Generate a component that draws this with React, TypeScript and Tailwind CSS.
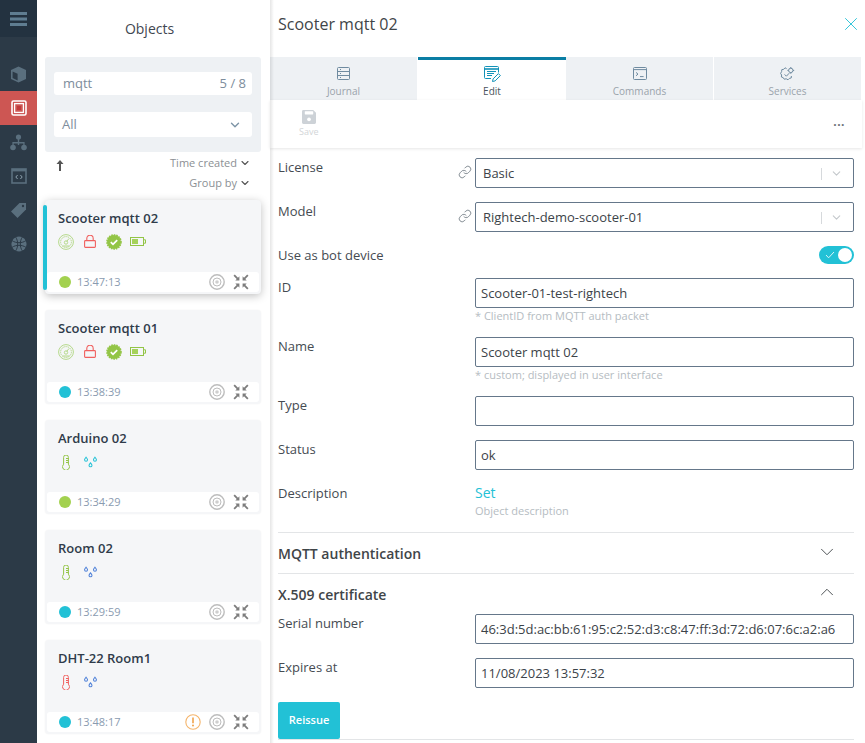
import React from "react";
import { ChevronDown, ChevronUp, X, Link } from "lucide-react";

const MenuIcon = () => (
  <svg width="18" height="14" viewBox="0 0 18 14" fill="#5f7d91">
    <rect x="0" y="0" width="17" height="3" />
    <rect x="0" y="5.5" width="17" height="3" />
    <rect x="0" y="11" width="17" height="3" />
  </svg>
);

const CubeIcon = () => (
  <svg width="17" height="17" viewBox="0 0 17 17">
    <path d="M8.5 0.5l7.5 3.5v9l-7.5 3.5L1 13V4z" fill="#5a6f7e" />
    <path d="M2.6 5.4l5 2.4v6.6l-5-2.4z" fill="#2c3a47" />
  </svg>
);

const TargetSquareIcon = () => (
  <svg width="16" height="16" viewBox="0 0 16 16">
    <rect x="1" y="1" width="14" height="14" rx="1.5" fill="none" stroke="#fff" strokeWidth="1.6" />
    <rect x="3.6" y="3.6" width="8.8" height="8.8" fill="none" stroke="#fff" strokeWidth="1.3" />
    <rect x="6" y="6" width="4" height="4" fill="#c03a3a" />
  </svg>
);

const TreeIcon = () => (
  <svg width="17" height="17" viewBox="0 0 17 17" fill="#5a6f7e">
    <circle cx="8.5" cy="3" r="2.6" />
    <circle cx="3" cy="13.5" r="2.8" />
    <circle cx="14" cy="13.5" r="2.8" />
    <path d="M7.8 5h1.4v3h5.4v3h-1.3V9.4H9.2V11H7.8V9.4H3.7V11H2.4V8h5.4z" />
  </svg>
);

const CodeIcon = () => (
  <svg width="16" height="16" viewBox="0 0 16 16" fill="none">
    <rect x="1" y="1" width="14" height="14" stroke="#5a6f7e" strokeWidth="1.6" />
    <rect x="1" y="1" width="14" height="2.4" fill="#5a6f7e" />
    <path d="M6.6 7L4.8 9l1.8 2M9.4 7l1.8 2-1.8 2" stroke="#8fa3b0" strokeWidth="1" />
  </svg>
);

const TagIcon = () => (
  <svg width="17" height="17" viewBox="0 0 17 17">
    <path d="M9.5 1H16v6.5L7.5 16 1 9.5z" fill="#5a6f7e" />
    <circle cx="13" cy="4" r="1.2" fill="#2c3a47" />
  </svg>
);

const GlobeIcon = () => (
  <svg width="16" height="16" viewBox="0 0 16 16">
    <circle cx="8" cy="8" r="7.6" fill="#5a6f7e" />
    <path d="M1 4.6C5 7.4 11 7.4 15 4.6M1 11.4C5 8.6 11 8.6 15 11.4M4.6 1C7.4 5 7.4 11 4.6 15M11.4 1C8.6 5 8.6 11 11.4 15" stroke="#2c3a47" strokeWidth="1" fill="none" />
  </svg>
);

const GaugeIcon = () => (
  <svg width="16" height="16" viewBox="0 0 16 16" fill="none" stroke="#b5d98a" strokeWidth="1">
    <circle cx="8" cy="8" r="7.4" />
    <circle cx="8" cy="8" r="5.4" strokeDasharray="1.5 0.7" />
    <circle cx="8" cy="8.5" r="1.7" />
    <path d="M8.6 7.5l2.4-3M4.6 12h6.8" />
  </svg>
);

const LockIcon = () => (
  <svg width="12" height="13" viewBox="0 0 12 13" fill="none" stroke="#f0605f" strokeWidth="1.1">
    <rect x="0.6" y="5.6" width="10.8" height="6.8" rx="0.8" />
    <path d="M2.8 5.6V3.4a3.2 3.2 0 0 1 6.4 0v2.2" />
  </svg>
);

const BadgeIcon = () => (
  <svg width="16" height="16" viewBox="0 0 16 16">
    <circle cx="8" cy="8" r="7" fill="#93c546" stroke="#93c546" strokeWidth="1.6" strokeDasharray="1.6 0.9" />
    <path d="M4.8 8.2l2.2 2.1 4.2-4.2" fill="none" stroke="#fff" strokeWidth="1.8" />
  </svg>
);

const BatteryIcon = () => (
  <svg width="16" height="9" viewBox="0 0 16 9" fill="none">
    <rect x="0.5" y="0.5" width="13" height="8" stroke="#93c546" strokeWidth="1" />
    <rect x="2" y="2" width="6" height="5" fill="#a5d25a" />
    <path d="M14 2.8h1.5v3.4H14" stroke="#93c546" strokeWidth="1" />
  </svg>
);

const ThermoIcon = ({ color }: { color: string }) => (
  <svg width="8" height="15" viewBox="0 0 8 15" fill="none" stroke={color} strokeWidth="1">
    <path d="M1.6 2.4a2.4 2.4 0 0 1 4.8 0v6.8a3.5 3.5 0 1 1-4.8 0z" />
    <path d="M4 3.5h2.4M4 5.5h2.4M4 7.5h2.4" />
  </svg>
);

const DropsIcon = ({ color }: { color: string }) => (
  <svg width="13" height="13" viewBox="0 0 14 13" fill="none" stroke={color} strokeWidth="1.1">
    <path d="M2.2 0.8c1 1.3 1.6 2 1.6 2.8a1.6 1.6 0 0 1-3.2 0c0-.8.6-1.5 1.6-2.8z" />
    <path d="M11.8 0.8c1 1.3 1.6 2 1.6 2.8a1.6 1.6 0 0 1-3.2 0c0-.8.6-1.5 1.6-2.8z" />
    <path d="M7 6.8c1 1.3 1.6 2 1.6 2.8a1.6 1.6 0 0 1-3.2 0c0-.8.6-1.5 1.6-2.8z" />
  </svg>
);

const TargetIcon = () => (
  <svg width="16" height="16" viewBox="0 0 16 16" fill="none" stroke="#bdbdbd">
    <circle cx="8" cy="8" r="7.2" strokeWidth="1.4" />
    <circle cx="8" cy="8" r="4" strokeWidth="1" />
    <circle cx="8" cy="8" r="1.8" fill="#cfcfcf" strokeWidth="0" />
  </svg>
);

const CompressIcon = () => (
  <svg width="16" height="16" viewBox="0 0 16 16" fill="#7d7d7d">
    <path d="M0.5 1.8L1.8 0.5 5 3.7 6.4 2.3V6.4H2.3L3.7 5z" />
    <path d="M15.5 1.8L14.2 0.5 11 3.7 9.6 2.3V6.4h4.1L12.3 5z" />
    <path d="M0.5 14.2l1.3 1.3L5 12.3l1.4 1.4V9.6H2.3L3.7 11z" />
    <path d="M15.5 14.2l-1.3 1.3-3.2-3.2-1.4 1.4V9.6h4.1L12.3 11z" />
  </svg>
);

const WarnIcon = () => (
  <svg width="16" height="16" viewBox="0 0 16 16" fill="none">
    <circle cx="8" cy="8" r="7.2" stroke="#f5b56c" strokeWidth="1.1" />
    <path d="M8 3.6v5.6" stroke="#f0a24a" strokeWidth="1.6" />
    <circle cx="8" cy="11.6" r="1" fill="#f0a24a" />
  </svg>
);

const JournalIcon = () => (
  <svg width="13" height="13" viewBox="0 0 13 13" fill="none" stroke="#6f8ba0" strokeWidth="1">
    <rect x="0.5" y="0.5" width="12" height="12" rx="1" />
    <path d="M0.5 4.5h12M0.5 8.5h12M3 2.5h1M3 6.5h1M3 10.5h1" />
  </svg>
);

const EditIcon = () => (
  <svg width="17" height="16" viewBox="0 0 17 16" fill="none" stroke="#1392b8" strokeWidth="1">
    <path d="M7 12.5H1.5a1 1 0 0 1-1-1v-10a1 1 0 0 1 1-1h12a1 1 0 0 1 1 1v5" />
    <path d="M0.5 3h14" strokeWidth="1.6" />
    <path d="M3 5.5h9M3 7.5h7M3 9.5h5" strokeWidth="1.2" />
    <path d="M8.5 15.5l.6-2.6 5.3-5.3 2 2-5.3 5.3z" />
  </svg>
);

const TerminalIcon = () => (
  <svg width="14" height="13" viewBox="0 0 14 13" fill="none" stroke="#6f8ba0" strokeWidth="1">
    <rect x="0.5" y="0.5" width="13" height="12" rx="1" />
    <path d="M0.5 2.6h13M3 5.4l2 1.7L3 8.8M7 9.6h3.6" />
  </svg>
);

const ServicesIcon = () => (
  <svg width="15" height="16" viewBox="0 0 15 16" fill="none" stroke="#6f8ba0" strokeWidth="1">
    <path d="M6.6 2.6L5 1.8 3.6 3.4 1.8 3.6l-.2 2L.6 7.4l1 1.6-.2 2 1.8.6 1 1.6 2-.4 1.8 1 1.4-1.4 1.8-.4.2-2" />
    <path d="M4.6 8.4l1.8 1.8 2.8-3" />
    <circle cx="10.8" cy="4.4" r="2.2" />
    <path d="M10.8 1v1.2M10.8 6.6v1.2M14.2 4.4H13M8.6 4.4H7.4" />
  </svg>
);

const SaveIcon = () => (
  <svg width="14" height="14" viewBox="0 0 15 15">
    <path d="M1.5 0H12l3 3v10.5a1.5 1.5 0 0 1-1.5 1.5h-12A1.5 1.5 0 0 1 0 13.5v-12A1.5 1.5 0 0 1 1.5 0z" fill="#cdd2d7" />
    <rect x="3" y="1.4" width="9" height="3.4" rx="0.5" fill="#fff" />
    <circle cx="7.5" cy="10" r="2" fill="#fff" />
  </svg>
);

const SortArrow = () => (
  <svg width="8" height="11" viewBox="0 0 8 11" fill="#555">
    <path d="M4 0L7.5 4H5v7H3V4H.5z" />
  </svg>
);

const Toggle = () => (
  <div className="w-[35px] h-[18px] rounded-full bg-[#22c1d6] relative flex items-center pl-[6px]">
    <svg width="10" height="8" viewBox="0 0 10 8" fill="none" stroke="#d8f5f9" strokeWidth="1">
      <path d="M1 4l2.6 2.8L9 1" />
    </svg>
    <span className="absolute right-[2px] top-[2px] w-[14px] h-[14px] rounded-full bg-white" />
  </div>
);

const sideItems = [
  { icon: <CubeIcon /> },
  { icon: <TargetSquareIcon />, active: true },
  { icon: <TreeIcon /> },
  { icon: <CodeIcon /> },
  { icon: <TagIcon /> },
  { icon: <GlobeIcon /> },
];

const objects = [
  { name: "Scooter mqtt 02", time: "13:47:13", dot: "bg-[#a3d14f]", selected: true, kind: "scooter" },
  { name: "Scooter mqtt 01", time: "13:38:39", dot: "bg-[#22c1d6]", kind: "scooter" },
  { name: "Arduino 02", time: "13:34:29", dot: "bg-[#a3d14f]", kind: "sensor", thermo: "#93c546", drops: "#22c1d6" },
  { name: "Room 02", time: "13:29:59", dot: "bg-[#22c1d6]", kind: "sensor", thermo: "#93c546", drops: "#4c7fd8" },
  { name: "DHT-22 Room1", time: "13:48:17", dot: "bg-[#22c1d6]", kind: "sensor", thermo: "#f0605f", drops: "#4c7fd8", warn: true },
];

const ObjectCard = ({ item }: { item: (typeof objects)[number] }) => (
  <div
    className={
      "relative h-[94px] shrink-0 rounded-[4px] bg-[#f5f6f8] flex flex-col " +
      (item.selected ? "shadow-[0_2px_8px_rgba(0,0,0,0.25)]" : "shadow-[0_0_2px_rgba(0,0,0,0.05)]")
    }
  >
    {item.selected && <span className="absolute left-[-2px] top-[5px] bottom-[4px] w-[4px] rounded-[2px] bg-[#22c1d6]" />}
    <div className="pl-[13px] pt-[9px] text-[13px] leading-[18px] font-semibold text-[#2f3b4a]">{item.name}</div>
    <div className="pl-[13px] mt-[6px] flex items-center h-[17px]">
      {item.kind === "scooter" ? (
        <div className="flex items-center">
          <GaugeIcon />
          <span className="ml-[10px]"><LockIcon /></span>
          <span className="ml-[10px]"><BadgeIcon /></span>
          <span className="ml-[8px]"><BatteryIcon /></span>
        </div>
      ) : (
        <div className="flex items-center pl-[4px] pt-[1px]">
          <ThermoIcon color={item.thermo as string} />
          <span className="ml-[14px]"><DropsIcon color={item.drops as string} /></span>
        </div>
      )}
    </div>
    <div className="mt-auto mx-[2px] mb-[2px] h-[20px] rounded-[3px] bg-white flex items-center pl-[12px] pr-[10px]">
      <span className={"w-[12px] h-[12px] rounded-full " + item.dot} />
      <span className="ml-[6px] text-[11px] text-[#8a9bb0]">{item.time}</span>
      <div className="ml-auto flex items-center gap-[8px]">
        {item.warn && <WarnIcon />}
        <TargetIcon />
        <CompressIcon />
      </div>
    </div>
  </div>
);

const tabs = [
  { label: "Journal", icon: <JournalIcon /> },
  { label: "Edit", icon: <EditIcon />, active: true },
  { label: "Commands", icon: <TerminalIcon /> },
  { label: "Services", icon: <ServicesIcon /> },
];

const Row = ({ label, children }: { label: string; children: React.ReactNode }) => (
  <div className="flex">
    <div className="w-[197px] shrink-0 text-[13px] leading-[18px] text-[#454b52]">{label}</div>
    <div className="flex-1 min-w-0">{children}</div>
  </div>
);

const TextField = ({ value, hint }: { value: string; hint?: string }) => (
  <div>
    <input
      readOnly
      value={value}
      className="w-full h-[30px] rounded-[2px] border border-[#65778a] px-[5px] text-[13px] text-[#3c4349] outline-none bg-white"
    />
    {hint && <div className="text-[11px] leading-[15px] text-[#b5bcc2]">{hint}</div>}
  </div>
);

const SelectRow = ({ label, value }: { label: string; value: string }) => (
  <div className="flex">
    <div className="w-[180px] shrink-0 text-[13px] leading-[18px] text-[#454b52]">{label}</div>
    <div className="w-[17px] shrink-0 pt-[7px] text-[#6e7881]">
      <Link size={14} strokeWidth={1.4} />
    </div>
    <div className="flex-1 h-[30px] rounded-[2px] border border-[#65778a] flex items-center pl-[7px] pr-[10px] pt-[1px] text-[13px] text-[#3c4349]">
      <span>{value}</span>
      <span className="ml-auto w-px h-[12px] bg-[#d6d9dc]" />
      <ChevronDown size={13} className="ml-[8px] text-[#c4c8cc]" />
    </div>
  </div>
);

const App = () => {
  return (
    <div className="w-[865px] h-[743px] overflow-hidden flex bg-white font-['Open_Sans',sans-serif]">
      {/* Sidebar */}
      <div className="w-[37px] shrink-0 bg-[#2c3a47] flex flex-col">
        <div className="h-[37px] bg-[#233240] flex items-center justify-center"><MenuIcon /></div>
        <div className="mt-[20px] flex flex-col">
          {sideItems.map((s, i) => (
            <div key={i} className={"h-[34px] flex items-center justify-center " + (s.active ? "bg-[#cd5653]" : "")}>
              {s.icon}
            </div>
          ))}
        </div>
      </div>

      {/* Objects list */}
      <div className="w-[233px] shrink-0 pl-[8px] pr-[9px] flex flex-col">
        <div className="h-[57px] flex items-center justify-center pr-[7px] text-[14px] text-[#3f4750]">Objects</div>
        <div className="shrink-0 h-[95px] rounded-[3px] bg-[#eef1f4] px-[9px] pt-[15px] flex flex-col">
          <div className="h-[23px] rounded-[3px] bg-white flex items-center justify-between pl-[9px] pr-[6px] text-[13px] text-[#7d8d9c]">
            <span>mqtt</span>
            <span>5 / 8</span>
          </div>
          <div className="mt-[17px] h-[25px] rounded-[3px] bg-white flex items-center justify-between pl-[8px] pr-[10px] text-[13px] text-[#7d8d9c]">
            <span>All</span>
            <ChevronDown size={14} strokeWidth={2.4} className="text-[#7d94a6]" />
          </div>
        </div>
        <div className="h-[48px] shrink-0 flex justify-between pl-[11px] pr-[10px] pt-[1px]">
          <span className="pt-[7px]"><SortArrow /></span>
          <div className="flex flex-col items-end text-[11px] leading-[20px] text-[#8b8f94]">
            <span className="flex items-center gap-[2px]">Time created <ChevronDown size={12} strokeWidth={2.2} className="text-[#555]" /></span>
            <span className="flex items-center gap-[2px]">Group by <ChevronDown size={12} strokeWidth={2.2} className="text-[#555]" /></span>
          </div>
        </div>
        <div className="flex flex-col gap-[16px]">
          {objects.map((o) => (
            <ObjectCard key={o.name} item={o} />
          ))}
        </div>
      </div>

      {/* Details */}
      <div className="flex-1 min-w-0 mr-[3px] flex flex-col relative">
        <span className="absolute left-0 top-0 bottom-0 w-[4px] bg-gradient-to-r from-black/10 to-transparent z-10" />
        <div className="h-[57px] shrink-0 flex items-center justify-between pl-[8px] pb-[9px]">
          <span className="text-[16px] text-[#3f4548]">Scooter mqtt 02</span>
          <X size={22} strokeWidth={1} className="text-[#22c1d6]" />
        </div>
        <div className="grid grid-cols-4 h-[43px] shrink-0">
          {tabs.map((t) => (
            <div
              key={t.label}
              className={
                "flex flex-col items-center text-[10px] leading-[14px] " +
                (t.active
                  ? "bg-white border-t-[3px] border-[#0a7ea4] pt-[5px] text-[#4a545c]"
                  : "bg-[#eef1f4] mr-px pt-[8px] text-[#9aa3ab]")
              }
            >
              <div className="h-[17px] flex items-center">{t.icon}</div>
              <div className="mt-[2px]">{t.label}</div>
            </div>
          ))}
        </div>
        <div className="h-[48px] shrink-0 flex items-start justify-between pl-[29px] pr-[17px] pt-[10px] shadow-[0_1px_3px_rgba(0,0,0,0.1)]">
          <div className="flex flex-col items-center">
            <SaveIcon />
            <span className="mt-[2px] text-[9px] leading-[12px] text-[#d2d5d8]">Save</span>
          </div>
          <span className="mt-[6px] text-[12px] leading-[12px] font-bold text-[#6b7178] tracking-[0.5px]">...</span>
        </div>

        <div className="px-[8px] pt-[10px] flex flex-col">
          <div className="flex flex-col gap-[14px]">
            <SelectRow label="License" value="Basic" />
            <SelectRow label="Model" value="Rightech-demo-scooter-01" />
            <div className="flex justify-between items-center h-[18px]">
              <span className="pt-[1px] text-[13px] text-[#454b52]">Use as bot device</span>
              <Toggle />
            </div>
            <Row label="ID"><TextField value="Scooter-01-test-rightech" hint="* ClientID from MQTT auth packet" /></Row>
            <Row label="Name"><TextField value="Scooter mqtt 02" hint="* custom; displayed in user interface" /></Row>
            <Row label="Type"><TextField value="" /></Row>
            <Row label="Status"><TextField value="ok" /></Row>
            <Row label="Description">
              <div className="text-[14px] leading-[18px] text-[#22c1d6]">Set</div>
              <div className="text-[11px] leading-[15px] mt-[1px] text-[#b5bcc2]">Object description</div>
            </Row>
          </div>

          <div className="mt-[14px] border-t border-[#e3e5e7] h-[41px] pt-[1px] flex items-center justify-between pr-[16px]">
            <span className="text-[14px] font-semibold text-[#3f4548]">MQTT authentication</span>
            <ChevronDown size={22} strokeWidth={1} className="text-[#3f4548] mb-[3px]" />
          </div>
          <div className="border-t border-[#e3e5e7] h-[41px] pt-[1px] flex items-center justify-between pr-[16px]">
            <span className="text-[14px] font-semibold text-[#3f4548]">X.509 certificate</span>
            <ChevronUp size={22} strokeWidth={1} className="text-[#3f4548] mb-[5px]" />
          </div>
          <div className="flex flex-col gap-[14px]">
            <Row label="Serial number"><TextField value="46:3d:5d:ac:bb:61:95:c2:52:d3:c8:47:ff:3d:72:d6:07:6c:a2:a6" /></Row>
            <Row label="Expires at"><TextField value="11/08/2023 13:57:32" /></Row>
          </div>
          <button className="mt-[14px] self-start w-[62px] h-[37px] rounded-[2px] bg-[#22c1d6] text-white text-[11px] font-semibold">Reissue</button>
          <div className="border-t border-[#e3e5e7]" />
        </div>
      </div>
    </div>
  );
};

export default App;
